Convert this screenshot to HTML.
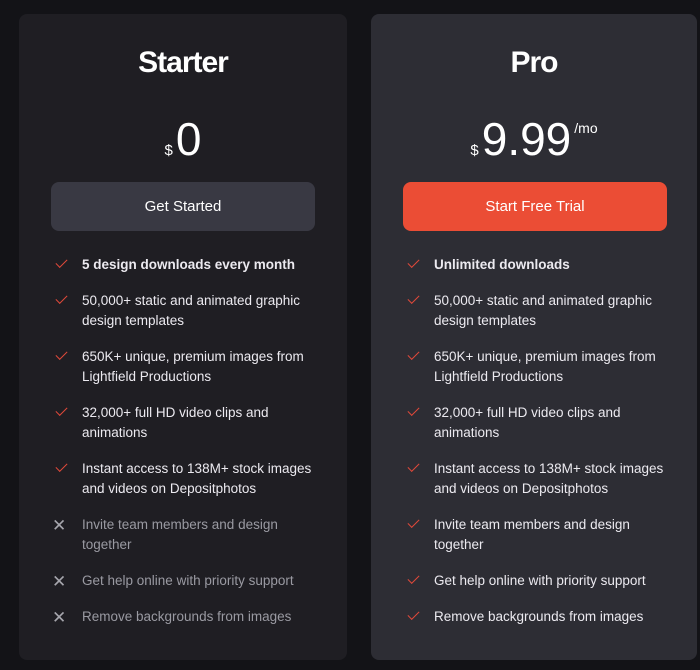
<!DOCTYPE html>
<html><head><style>
*{margin:0;padding:0;box-sizing:border-box}
body{width:700px;height:670px;background:#131317;font-family:"Liberation Sans",sans-serif;color:#fff;position:relative;overflow:hidden}
.card{position:absolute;top:14px;height:646px;border-radius:8px}
.c1{left:19px;width:328px;background:#1f1e23}
.c2{left:371px;width:326px;background:#2d2d34}
h2{position:absolute;top:32px;left:0;right:0;text-align:center;font-size:30px;font-weight:bold;letter-spacing:-1px}
.price{position:absolute;top:102px;left:0;right:0;text-align:center;font-size:46px;line-height:46px}
.price sup{font-size:15px;vertical-align:top;position:relative;top:12px;margin-right:3px}
.price .mo{font-size:14px;position:relative;top:-22px;vertical-align:baseline;margin-left:3px}
.btn{position:absolute;top:168px;left:32px;width:264px;height:49px;border-radius:8px;text-align:center;line-height:50px;font-size:15px}
.c1 .btn{background:#393943}
.c2 .btn{background:#eb4d35;width:264px}
ul{position:absolute;top:241px;left:32px;right:20px;list-style:none}
li{position:relative;padding-left:31px;font-size:13.5px;line-height:20px;margin-bottom:16px;color:#eceaf0}
li.b{font-weight:bold}
li.x{color:#9a9aa2}
li:before{content:"";position:absolute;left:5px;top:4px;width:10px;height:5px;border-left:1.6px solid #e0493a;border-bottom:1.6px solid #e0493a;transform:rotate(-45deg)}
li.x:before{content:"✕";border:none;transform:none;color:#a6a6ad;font-size:17px;left:1px;top:1px;width:auto;height:auto}
</style></head><body>
<div class="card c1">
<h2>Starter</h2>
<div class="price"><sup>$</sup>0</div>
<div class="btn">Get Started</div>
<ul>
<li class="b">5 design downloads every month</li>
<li>50,000+ static and animated graphic design templates</li>
<li>650K+ unique, premium images from Lightfield Productions</li>
<li>32,000+ full HD video clips and animations</li>
<li>Instant access to 138M+ stock images and videos on Depositphotos</li>
<li class="x">Invite team members and design together</li>
<li class="x">Get help online with priority support</li>
<li class="x">Remove backgrounds from images</li>
</ul>
</div>
<div class="card c2">
<h2>Pro</h2>
<div class="price"><sup>$</sup>9.99<span class="mo">/mo</span></div>
<div class="btn">Start Free Trial</div>
<ul>
<li class="b">Unlimited downloads</li>
<li>50,000+ static and animated graphic design templates</li>
<li>650K+ unique, premium images from Lightfield Productions</li>
<li>32,000+ full HD video clips and animations</li>
<li>Instant access to 138M+ stock images and videos on Depositphotos</li>
<li>Invite team members and design together</li>
<li>Get help online with priority support</li>
<li>Remove backgrounds from images</li>
</ul>
</div>
</body></html>
